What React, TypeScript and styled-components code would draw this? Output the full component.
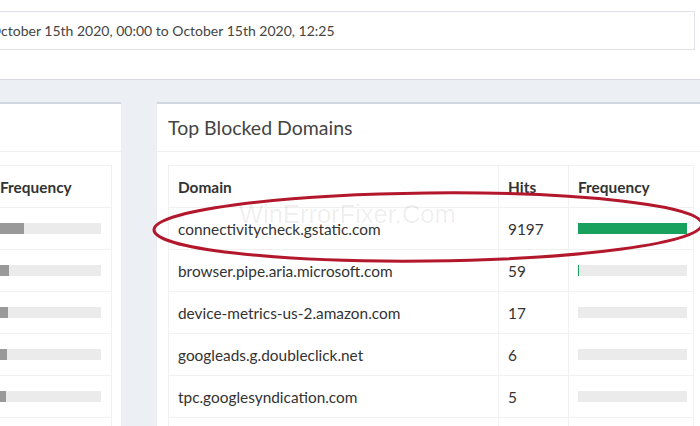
import React from "react";
import styled, { createGlobalStyle } from "styled-components";

const GlobalStyle = createGlobalStyle`
  html, body { margin: 0; padding: 0; background: #ffffff; overflow: hidden; }
  body { font-family: Lato, "Open Sans", sans-serif; color: #333; }
`;

const Page = styled.div`
  position: relative;
  width: 700px;
  height: 426px;
  overflow: hidden;
  display: flex;
  flex-direction: column;
`;

const TopBar = styled.div`
  height: 80px;
  flex-shrink: 0;
  box-sizing: border-box;
  padding-top: 11px;
  border-bottom: 1px solid #d6d9df;
  background: #fff;
  display: flex;
`;

const DateInput = styled.div`
  margin-left: -20px;
  width: 715px;
  height: 39px;
  box-sizing: border-box;
  border: 1px solid #dfe2e6;
  display: flex;
  align-items: center;
  padding-left: 9px;
  font-size: 14px;
  color: #444;
  white-space: nowrap;
`;

const Content = styled.div`
  flex: 1;
  background: #ecf0f5;
  display: flex;
  align-items: flex-start;
  gap: 36px;
  padding-top: 22px;
`;

const Panel = styled.div<{ $offset?: number; $width: number }>`
  flex-shrink: 0;
  width: ${(p) => p.$width}px;
  margin-left: ${(p) => p.$offset ?? 0}px;
  background: #fff;
  border-top: 2px solid #d2d6de;
  box-shadow: 0 1px 1px rgba(0, 0, 0, 0.08);
  min-height: 340px;
`;

const PanelHeader = styled.div`
  height: 48px;
  box-sizing: border-box;
  border-bottom: 1px solid #eff0f2;
  padding-left: 11px;
  display: flex;
  align-items: center;
  font-size: 19.5px;
  color: #444;
  white-space: nowrap;
`;

const PanelBody = styled.div`
  padding: 13px 10px 0 11px;
`;

const Table = styled.table`
  width: 100%;
  border-collapse: collapse;
  border: 1px solid #f1f1f1;
  table-layout: fixed;
  font-size: 15.4px;
`;

const Th = styled.th<{ $w: number }>`
  box-sizing: border-box;
  width: ${(p) => p.$w}px;
  height: 42px;
  text-align: left;
  font-weight: 700;
  padding: 0 9px;
  border: 1px solid #f1f1f1;
  color: #333;
  white-space: nowrap;
`;

const Td = styled.td`
  box-sizing: border-box;
  height: 42px;
  padding: 0 9px;
  border: 1px solid #f1f1f1;
  color: #333;
  white-space: nowrap;
  overflow: hidden;
`;

const BarTrack = styled.div`
  height: 11px;
  background: #ebebeb;
  display: flex;
`;

const BarFill = styled.div<{ $color: string }>`
  height: 100%;
  background: ${(p) => p.$color};
`;

const Watermark = styled.div`
  position: absolute;
  left: 239px;
  top: 200px;
  font-family: "Liberation Sans", Arial, sans-serif;
  font-size: 25.5px;
  color: rgba(0, 0, 0, 0.07);
  pointer-events: none;
`;

const Overlay = styled.svg`
  position: absolute;
  left: 0;
  top: 0;
  pointer-events: none;
`;

type Row = { domain: string; hits: number; frac: number };

const rightRows: Row[] = [
  { domain: "connectivitycheck.gstatic.com", hits: 9197, frac: 1 },
  { domain: "browser.pipe.aria.microsoft.com", hits: 59, frac: 0.01 },
  { domain: "device-metrics-us-2.amazon.com", hits: 17, frac: 0 },
  { domain: "googleads.g.doubleclick.net", hits: 6, frac: 0 },
  { domain: "tpc.googlesyndication.com", hits: 5, frac: 0 },
  { domain: "", hits: 0, frac: 0 },
];

const leftRows: Row[] = [
  { domain: "www.google.com", hits: 412, frac: 0.24 },
  { domain: "clients4.google.com", hits: 151, frac: 0.09 },
  { domain: "login.live.com", hits: 133, frac: 0.08 },
  { domain: "settings-win.data.microsoft.com", hits: 118, frac: 0.07 },
  { domain: "www.bing.com", hits: 97, frac: 0.06 },
  { domain: "", hits: 0, frac: 0 },
];

function DomainTable({
  rows,
  color,
  widths,
  barWidth,
}: {
  rows: Row[];
  color: string;
  widths: [number, number, number];
  barWidth: number;
}) {
  return (
    <Table>
      <thead>
        <tr>
          <Th $w={widths[0]}>Domain</Th>
          <Th $w={widths[1]}>Hits</Th>
          <Th $w={widths[2]}>Frequency</Th>
        </tr>
      </thead>
      <tbody>
        {rows.map((r, i) => (
          <tr key={i}>
            <Td>{r.domain}</Td>
            <Td>{r.domain ? r.hits : ""}</Td>
            <Td>
              {r.domain && (
                <BarTrack style={{ width: barWidth }}>
                  <BarFill $color={color} style={{ width: `${r.frac * 100}%` }} />
                </BarTrack>
              )}
            </Td>
          </tr>
        ))}
      </tbody>
    </Table>
  );
}

export default function App() {
  return (
    <>
      <GlobalStyle />
      <Page>
        <TopBar>
          <DateInput>October 15th 2020, 00:00 to October 15th 2020, 12:25</DateInput>
        </TopBar>
        <Content>
          <Panel $offset={-279} $width={400}>
            <PanelHeader>Top Permitted Domains</PanelHeader>
            <PanelBody>
              <DomainTable rows={leftRows} color="#999999" widths={[188, 70, 121]} barWidth={101} />
            </PanelBody>
          </Panel>
          <Panel $width={546}>
            <PanelHeader>Top Blocked Domains</PanelHeader>
            <PanelBody>
              <DomainTable rows={rightRows} color="#17a15c" widths={[330, 70, 125]} barWidth={109} />
            </PanelBody>
          </Panel>
        </Content>
        <Watermark>WinErrorFixer.Com</Watermark>
        <Overlay width="700" height="426" viewBox="0 0 700 426">
          <ellipse
            cx="428"
            cy="227"
            rx="274"
            ry="34"
            fill="none"
            stroke="#b3172c"
            strokeWidth="3"
            transform="rotate(-0.6 428 227)"
          />
        </Overlay>
      </Page>
    </>
  );
}
